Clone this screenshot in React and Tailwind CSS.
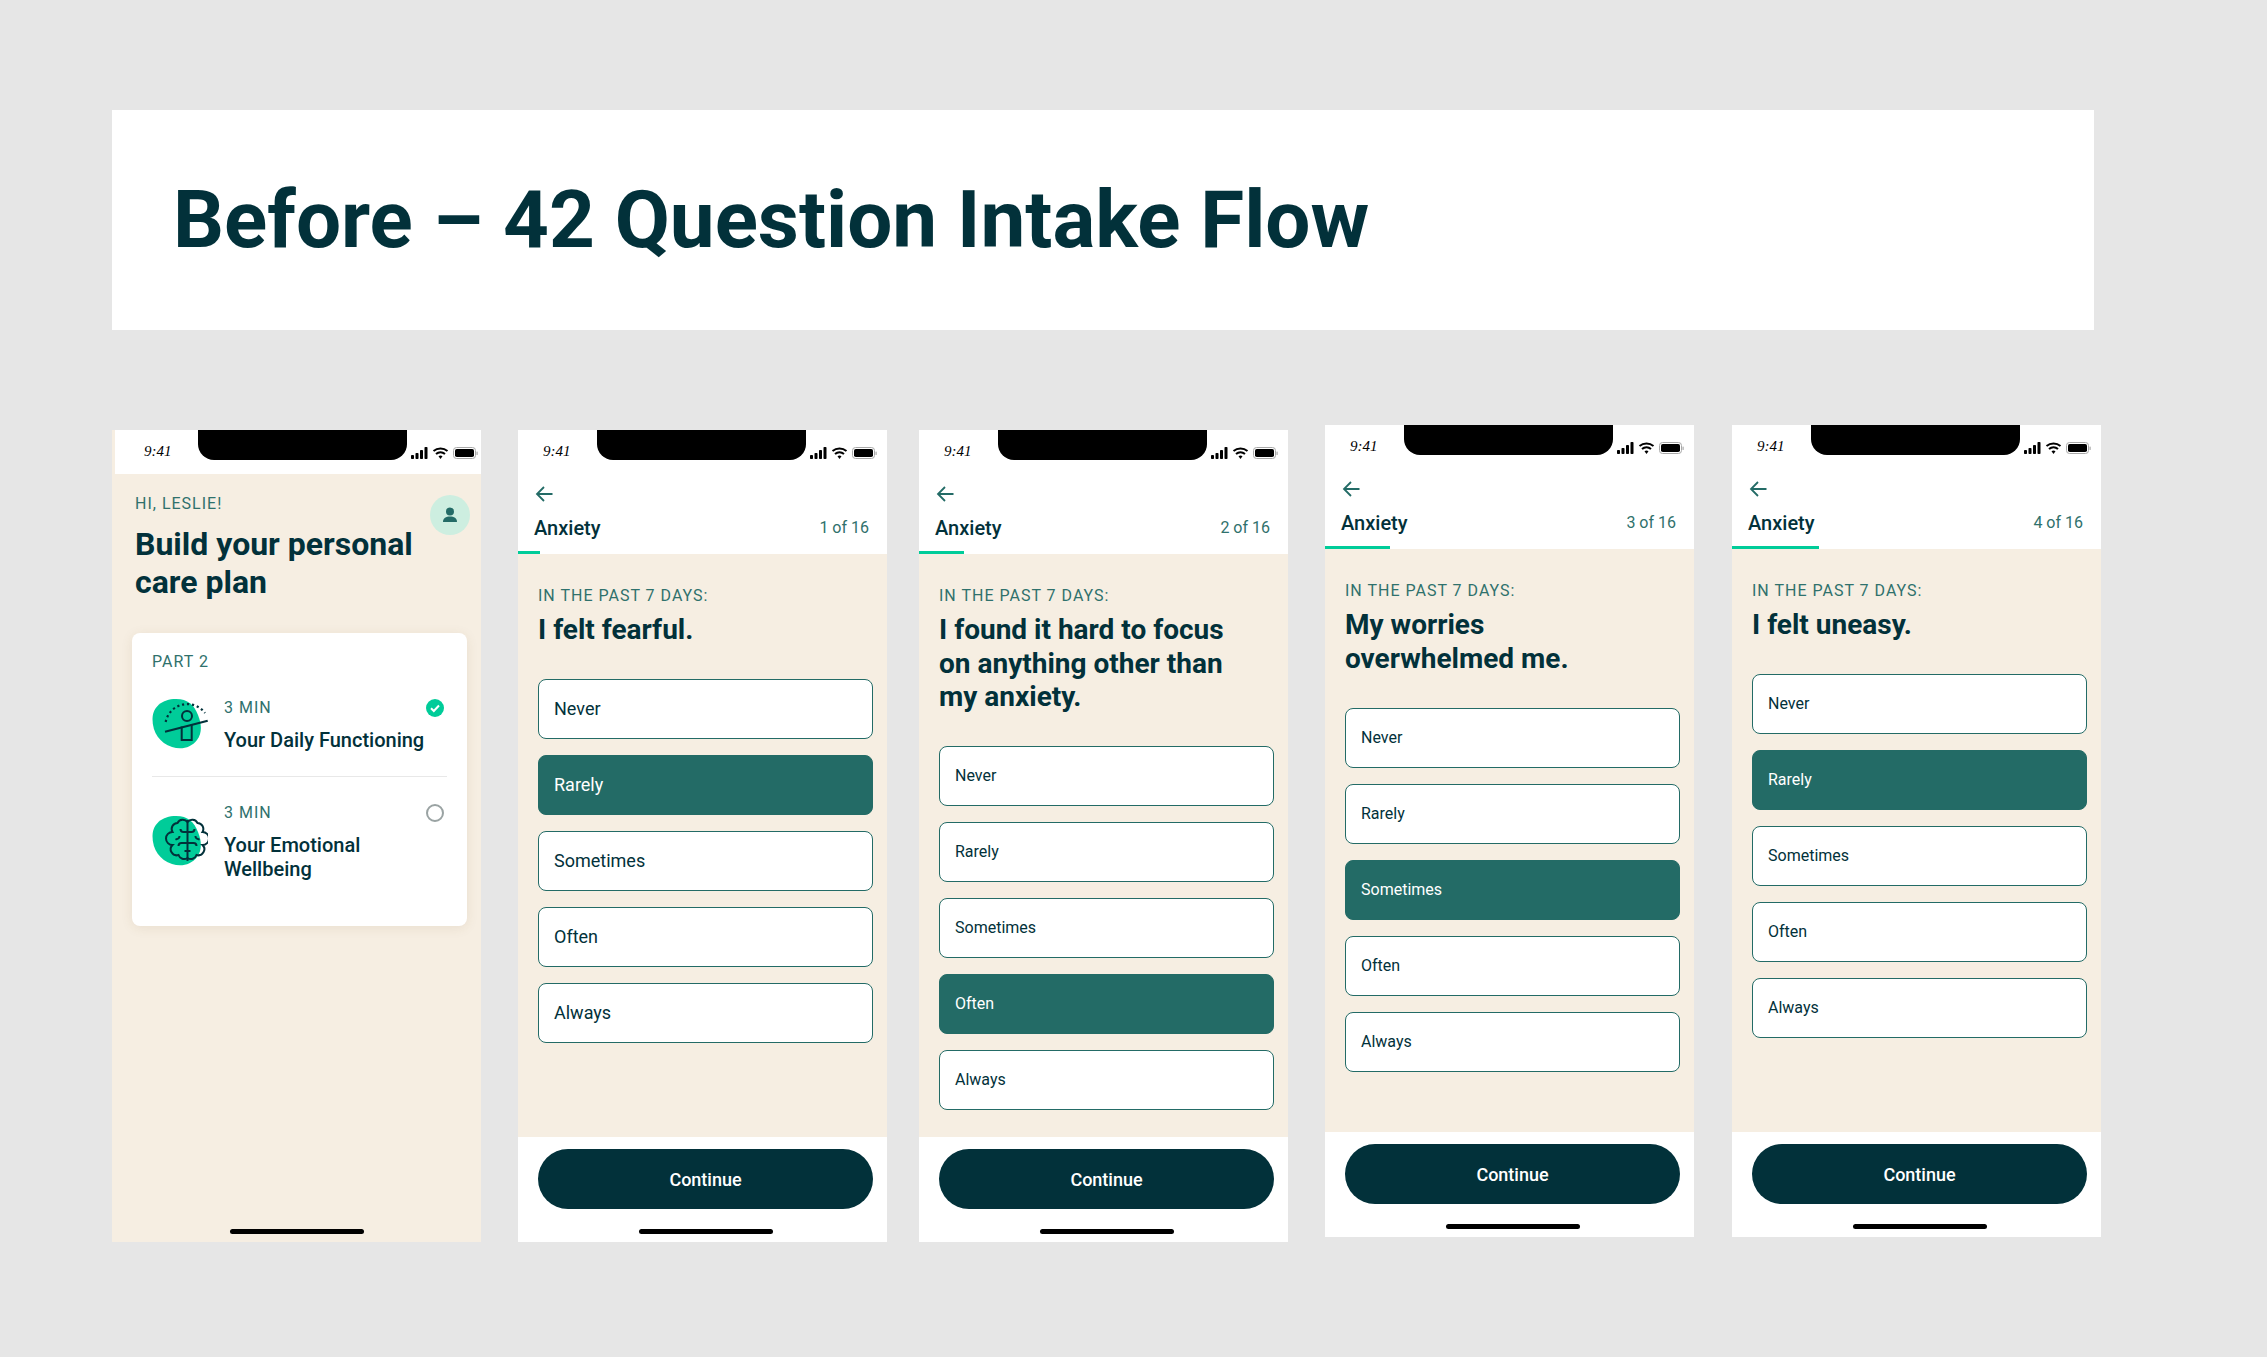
import React from "react";

const options = ["Never", "Rarely", "Sometimes", "Often", "Always"];

const screens = [
  { step: "1 of 16", bar: "w-[22px]", lines: ["I felt fearful."], selected: "Rarely", size: "text-[18px]", place: "ml-[37px] mt-[5px]", gap: "mt-[32px]" },
  { step: "2 of 16", bar: "w-[45px]", lines: ["I found it hard to focus", "on anything other than", "my anxiety."], selected: "Often", size: "text-[16px]", place: "ml-[32px] mt-[5px]", gap: "mt-[32px]" },
  { step: "3 of 16", bar: "w-[65px]", lines: ["My worries", "overwhelmed me."], selected: "Sometimes", size: "text-[16px]", place: "ml-[37px]", gap: "mt-[33px]" },
  { step: "4 of 16", bar: "w-[87px]", lines: ["I felt uneasy."], selected: "Rarely", size: "text-[16px]", place: "ml-[38px]", gap: "mt-[32px]" },
];

const StatusIcons = () => (
  <svg width="67" height="14" viewBox="0 0 67 14" className="mt-[16px] ml-[4px]">
    <rect x="0" y="9" width="3" height="4" rx="0.8" fill="#000" />
    <rect x="4.5" y="7" width="3" height="6" rx="0.8" fill="#000" />
    <rect x="9" y="4" width="3" height="9" rx="0.8" fill="#000" />
    <rect x="13.5" y="1" width="3" height="12" rx="0.8" fill="#000" />
    <path d="M22.5 5 A 11 11 0 0 1 36.5 5 M25 8 A 7 7 0 0 1 34 8" fill="none" stroke="#000" strokeWidth="2" />
    <path d="M27.5 10.3 L29.5 13 L31.5 10.3 A 3 3 0 0 0 27.5 10.3Z" fill="#000" />
    <rect x="42.5" y="1.5" width="22" height="11" rx="3" fill="none" stroke="#a8a8a8" />
    <rect x="44" y="3" width="19" height="8" rx="1.8" fill="#000" />
    <rect x="65.5" y="5.5" width="1.2" height="3.5" rx="0.6" fill="#a8a8a8" />
  </svg>
);

const StatusBar = ({ className }) => (
  <div className={`flex h-[44px] shrink-0 bg-white ${className}`}>
    <div className="w-[54px] pt-[12px] font-['Liberation_Serif',serif] text-[15px] leading-[18px] italic text-black">9:41</div>
    <div className="h-[30px] w-[209px] rounded-b-[16px] bg-black"></div>
    <StatusIcons />
  </div>
);

const HomeBar = () => <div className="mx-auto h-[5px] w-[134px] rounded-full bg-black"></div>;

const Blob = () => (
  <path d="M0.5 20 C0.5 8 10 0 24 0 C36 0 42 6 46 16 C50 26 50 34 45 41 C39 49 29 51 20 48 C8 44 0.5 34 0.5 20Z" fill="#00cc99" />
);

const BalanceIcon = () => (
  <svg width="56" height="50" viewBox="0 0 56 50" className="shrink-0">
    <Blob />
    <path d="M13.7 23 A 22 22 0 0 1 53 14" fill="none" stroke="#02313a" strokeWidth="2.2" strokeDasharray="2.2 2.8" />
    <circle cx="35" cy="17" r="5" fill="none" stroke="#02313a" strokeWidth="2" />
    <path d="M13 32.7 L55.7 21.7" fill="none" stroke="#02313a" strokeWidth="2.2" />
    <path d="M29.7 27.5 V41 H39.7 V25.5" fill="none" stroke="#02313a" strokeWidth="2" />
  </svg>
);

const brainHalf =
  "M0 -18 A6 6 0 0 1 10 -17 A6 6 0 0 1 15 -8 A6.5 6.5 0 0 1 15 5 A6 6 0 0 1 9 15 A6 6 0 0 1 0 18 M0 -8 H4 A3 3 0 0 0 7 -11 M0 3 H6 A3 3 0 0 1 9 6 M8 -4 A3 3 0 0 0 12 -1 M0 11 H3";

const BrainIcon = () => (
  <svg width="56" height="50" viewBox="0 0 56 50" className="mt-[12px] shrink-0">
    <Blob />
    <g transform="translate(35.5 24)" fill="none" stroke="#02313a" strokeWidth="2">
      <path d="M0 -20 V21" />
      <path d={brainHalf} />
      <path d={brainHalf} transform="scale(-1 1)" />
    </g>
  </svg>
);

const PlanItem = ({ icon, title, done, className }) => (
  <div className={`flex items-start ${className}`}>
    {icon}
    <div className="ml-[16px] flex-1">
      <div className="flex items-start justify-between">
        <p className="text-[16px] leading-[18px] tracking-[1px] text-[#2f716c]">3 MIN</p>
        {done ? (
          <svg width="18" height="18" viewBox="0 0 18 18" className="mr-[3px]">
            <circle cx="9" cy="9" r="9" fill="#00cc99" />
            <path d="M5 9.3 L7.8 12 L13 6.5" fill="none" stroke="#fff" strokeWidth="2" />
          </svg>
        ) : (
          <div className="mr-[3px] h-[18px] w-[18px] rounded-full border-2 border-[#9aa3a3]"></div>
        )}
      </div>
      <p className="mt-[11px] text-[20px] leading-[24px] font-medium text-[#02313a]">{title}</p>
    </div>
  </div>
);

const PlanScreen = () => (
  <div className="mt-[5px] flex h-[812px] w-[369px] shrink-0 flex-col bg-[#f6eee2]">
    <StatusBar className="ml-[3px] pl-[29px]" />
    <div className="flex items-start justify-between pt-[21px] pr-[11px] pl-[23px]">
      <div>
        <p className="text-[16px] leading-[18px] tracking-[1px] text-[#2f716c]">HI, LESLIE!</p>
        <h2 className="mt-[12px] w-[300px] text-[32px] leading-[38px] font-bold text-[#02313a]">Build your personal care plan</h2>
      </div>
      <div className="-ml-[10px] flex h-[40px] w-[40px] shrink-0 items-center justify-center rounded-full bg-[#cdeee0]">
        <svg width="16" height="16" viewBox="0 0 16 16">
          <circle cx="8" cy="4.5" r="4" fill="#236b66" />
          <path d="M1 15 C1 11 4 9.5 8 9.5 C12 9.5 15 11 15 15Z" fill="#236b66" />
        </svg>
      </div>
    </div>
    <div className="mt-[32px] ml-[20px] h-[293px] w-[335px] rounded-[8px] bg-white px-[20px] pt-[20px] shadow-[0_2px_12px_rgba(120,90,40,0.10)]">
      <p className="text-[16px] leading-[18px] tracking-[1px] text-[#2f716c]">PART 2</p>
      <PlanItem icon={<BalanceIcon />} title="Your Daily Functioning" done className="mt-[28px]" />
      <div className="mt-[24px] h-px bg-[#e8e8e8]"></div>
      <PlanItem icon={<BrainIcon />} title="Your Emotional Wellbeing" className="mt-[27px]" />
    </div>
    <div className="mt-auto pb-[8px]">
      <HomeBar />
    </div>
  </div>
);

const QuestionScreen = ({ step, bar, lines, selected, size, place, gap }) => (
  <div className={`flex h-[812px] w-[369px] shrink-0 flex-col bg-white ${place}`}>
    <StatusBar className="pl-[25px]" />
    <div className="relative h-[80px] shrink-0 px-[17px]">
      <svg width="20" height="20" viewBox="0 0 20 20" className="mt-[10px] block">
        <path d="M17.5 10 H2 M9 3 L2 10 L9 17" fill="none" stroke="#236b66" strokeWidth="1.8" />
      </svg>
      <div className="mt-[10px] flex items-center justify-between pr-[1px]">
        <p className="-ml-px text-[20px] leading-[28px] font-medium text-[#02313a]">Anxiety</p>
        <p className="text-[16px] leading-[24px] text-[#2f716c]">{step}</p>
      </div>
      <div className={`absolute bottom-0 left-0 h-[3px] bg-[#00cc99] ${bar}`}></div>
    </div>
    <div className="flex-1 bg-[#f6eee2] pt-[32px] pr-[14px] pl-[20px]">
      <p className="text-[16px] leading-[20px] tracking-[1px] text-[#2f716c]">IN THE PAST 7 DAYS:</p>
      <h2 className="mt-[7px] text-[28px] leading-[33.5px] font-bold text-[#02313a]">
        {lines.map((line) => (
          <div key={line}>{line}</div>
        ))}
      </h2>
      <div className={`flex flex-col gap-[16px] ${gap}`}>
        {options.map((option) => (
          <div
            key={option}
            className={`flex h-[60px] items-center rounded-[8px] border border-[#236b66] px-[15px] ${size} ${
              option === selected ? "bg-[#236b66] text-white" : "bg-white text-[#02313a]"
            }`}
          >
            {option}
          </div>
        ))}
      </div>
    </div>
    <div className="h-[105px] shrink-0 pt-[12px] pr-[14px] pl-[20px]">
      <button className="h-[60px] w-full rounded-full bg-[#02313a] text-[18px] font-medium text-white">Continue</button>
      <div className="mt-[20px]">
        <HomeBar />
      </div>
    </div>
  </div>
);

export default function App() {
  return (
    <div className="h-[1357px] overflow-hidden bg-[#e6e6e6] pt-[110px] pl-[112px] font-[Roboto,sans-serif]">
      <div className="flex h-[220px] w-[1982px] items-center bg-white pl-[61px]">
        <h1 className="text-[80px] leading-none font-bold text-[#02313a]">Before – 42 Question Intake Flow</h1>
      </div>
      <div className="mt-[95px] flex items-start">
        <PlanScreen />
        {screens.map((screen) => (
          <QuestionScreen key={screen.step} {...screen} />
        ))}
      </div>
    </div>
  );
}
